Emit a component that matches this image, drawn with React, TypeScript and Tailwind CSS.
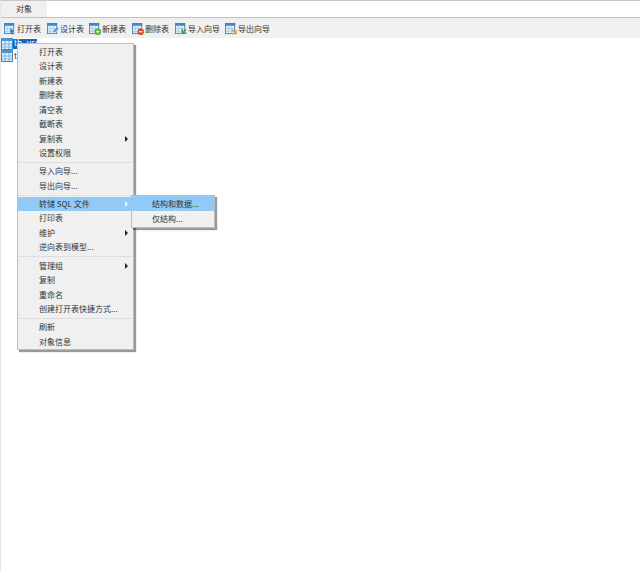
const font = { fontFamily: '"Noto Sans CJK SC", "Liberation Sans", sans-serif' }

function TableBase({ children, tint = "#3b87c6" }: { children?: React.ReactNode; tint?: string }) {
  return (
    <svg width="12" height="12" viewBox="0 0 13 13" className="mr-px shrink-0">
      <rect x="0.5" y="0.5" width="10" height="11" fill="#e4f0f9" stroke={tint} />
      <rect x="0" y="0" width="11" height="3" fill={tint} />
      <path d="M3.5 3v8M7 3v8M1 6h9M1 9h9" stroke="#a9cde8" strokeWidth="1" />
      {children}
    </svg>
  )
}

function ToolIcon({ name }: { name: string }) {
  if (name === "open")
    return (
      <TableBase>
        <path d="M7 6l4 3-2 .5 1 2.5-1.2.4-1-2.4L7 11z" fill="#2b6ca3" />
      </TableBase>
    )
  if (name === "design")
    return (
      <TableBase>
        <path d="M6 11l1-3 4-4 2 2-4 4z" fill="#5a8fbd" stroke="#fff" strokeWidth="0.5" />
      </TableBase>
    )
  if (name === "new")
    return (
      <TableBase>
        <circle cx="9.5" cy="9.5" r="3.5" fill="#4fa82e" />
        <path d="M7.5 9.5h4M9.5 7.5v4" stroke="#fff" strokeWidth="1" />
      </TableBase>
    )
  if (name === "delete")
    return (
      <TableBase>
        <circle cx="9.5" cy="9.5" r="3.5" fill="#d9482b" />
        <path d="M7.5 9.5h4" stroke="#fff" strokeWidth="1.2" />
      </TableBase>
    )
  if (name === "import")
    return (
      <TableBase>
        <path d="M8 6.5v4.5h4.5M8 11l4-4" fill="none" stroke="#3d9a34" strokeWidth="1.4" />
      </TableBase>
    )
  return (
    <TableBase>
      <path d="M7.5 7l4 4M12 7.5V11.5H8" fill="none" stroke="#e8982a" strokeWidth="1.4" />
    </TableBase>
  )
}

function TreeIcon() {
  return (
    <svg width="12" height="12" viewBox="0 0 12 12" className="shrink-0">
      <rect x="0.5" y="0.5" width="11" height="11" fill="#e0eefa" stroke="#3b87c6" />
      <rect x="0" y="0" width="12" height="3" fill="#4a94d2" />
      <path d="M4 3v8M8 3v8M1 6h10M1 9h10" stroke="#7ab3e0" strokeWidth="1" />
    </svg>
  )
}

const tools = [
  { icon: "open", label: "打开表", w: "w-[43px]" },
  { icon: "design", label: "设计表", w: "w-[42px]" },
  { icon: "new", label: "新建表", w: "w-[43px]" },
  { icon: "delete", label: "删除表", w: "w-[43px]" },
  { icon: "import", label: "导入向导", w: "w-[50px]" },
  { icon: "export", label: "导出向导", w: "w-[50px]" },
]

const menuGroups = [
  [
    { label: "打开表" },
    { label: "设计表" },
    { label: "新建表" },
    { label: "删除表" },
    { label: "清空表" },
    { label: "截断表" },
    { label: "复制表", sub: true },
    { label: "设置权限" },
  ],
  [{ label: "导入向导..." }, { label: "导出向导..." }],
  [
    { label: "转储 SQL 文件", sub: true, active: true },
    { label: "打印表" },
    { label: "维护", sub: true },
    { label: "逆向表到模型..." },
  ],
  [
    { label: "管理组", sub: true },
    { label: "复制" },
    { label: "重命名" },
    { label: "创建打开表快捷方式..." },
  ],
  [{ label: "刷新" }, { label: "对象信息" }],
]

function Menu() {
  return (
    <div className="absolute left-[16px] top-[43px] w-[117px] border border-[#bdbdbd] bg-[#f0f0f0] py-[0.5px] shadow-[2px_2px_1px_rgba(0,0,0,0.4)]">
      {menuGroups.map((group, i) => (
        <div key={i} className={i > 0 ? "mt-[1.6px] border-t border-[#dedede] pt-[1px]" : ""}>
          {group.map((item) => (
            <div
              key={item.label}
              className={`flex h-[14.5px] items-center justify-between pl-[21px] pr-[5px] ${item.active ? "bg-[#91c9f7]" : ""}`}
            >
              <span>{item.label}</span>
              {item.sub && (
                <span
                  className={`h-0 w-0 border-y-[3px] border-l-[3px] border-y-transparent ${item.active ? "border-l-[#e8f3fc]" : "border-l-[#222222]"}`}
                />
              )}
            </div>
          ))}
        </div>
      ))}
    </div>
  )
}

function SubMenu() {
  return (
    <div className="absolute left-[130px] top-[195px] w-[84px] border border-[#bdbdbd] bg-[#f0f0f0] pb-px shadow-[2px_2px_1px_rgba(0,0,0,0.4)]">
      <div className="flex h-[15px] items-center bg-[#91c9f7] pl-[20px]">结构和数据...</div>
      <div className="flex h-[15px] items-center pl-[20px]">仅结构...</div>
    </div>
  )
}

export default function App() {
  return (
    <div className="relative h-[572px] w-[640px] overflow-hidden border-l border-[#e6e6e6] bg-white text-[8px] leading-none text-[#333333]" style={font}>
      <div className="flex h-[18px] border-y border-t-[#c8c8c8] border-b-[#c0c0c0] bg-white">
        <div className="flex w-[46px] items-center justify-center bg-[#f0f0f0]">对象</div>
      </div>
      <div className="flex h-[20px] items-center bg-[#f0f0f0] pl-[3px] pt-[2px]">
        {tools.map((t) => (
          <div key={t.label} className={`flex items-center ${t.w}`}>
            <ToolIcon name={t.icon} />
            <span className="whitespace-nowrap">{t.label}</span>
          </div>
        ))}
      </div>
      <div className="flex flex-col">
        <div className="flex h-[12px] items-center">
          <TreeIcon />
          <span className="h-[10px] w-[24px] bg-[#1469b8] pl-px text-white">tb_user</span>
        </div>
        <div className="flex h-[12px] items-center">
          <TreeIcon />
          <span className="pl-px">t</span>
        </div>
      </div>
      <Menu />
      <SubMenu />
    </div>
  )
}
